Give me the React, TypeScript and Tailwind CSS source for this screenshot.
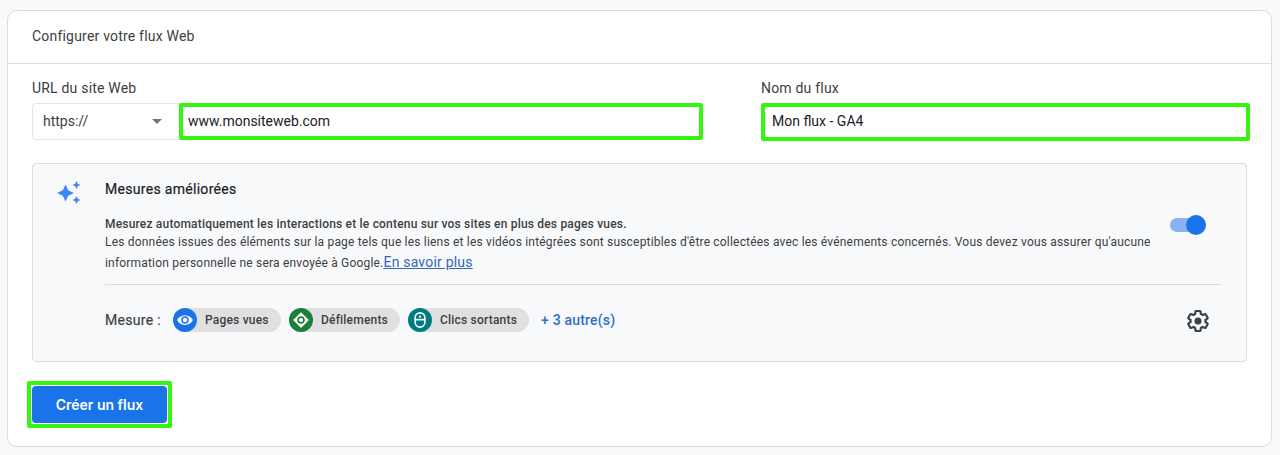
import React from "react";

function Chip({ color, label, children, width }: { color: string; label: string; children: React.ReactNode; width: string }) {
  return (
    <div className={`flex h-6 items-center rounded-full bg-[#e0e0e0] ${width}`}>
      <div className={`flex h-6 w-6 shrink-0 items-center justify-center rounded-full ${color}`}>{children}</div>
      <span className="ml-2 text-[12px] font-medium tracking-[0.2px] text-[#3c4043]">{label}</span>
    </div>
  );
}

export default function App() {
  return (
    <div className="h-[455px] overflow-hidden bg-[#f8f9fa] pl-[7px] pt-[10px] font-['Roboto',sans-serif]">
      <div className="h-[437px] w-[1265px] rounded-[10px] border border-[#dadce0] bg-white">
        <div className="flex h-[53px] items-center border-b border-[#dadce0] pb-[2px] pl-[24px] text-[14px] tracking-[0.2px] text-[#3c4043]">
          Configurer votre flux Web
        </div>
        <div className="px-[24px] pt-[15px]">
          <div className="flex">
            <div className="w-[672px] shrink-0">
              <div className="h-[24px] text-[14px] leading-[18px] tracking-[0.2px] text-[#3c4043]">URL du site Web</div>
              <div className="flex h-[37px]">
                <div className="flex w-[148px] items-center justify-between rounded-l-[4px] border border-[#e3e5e8] pl-[10px] pr-[17px] text-[14px] text-[#3c4043]">
                  <span>https://</span>
                  <span className="h-0 w-0 border-x-[5px] border-t-[5px] border-x-transparent border-t-[#757575]" />
                </div>
                <div className="-ml-px flex h-[37px] w-[524px] items-center rounded-[2px] border-[4px] border-[#33f50f] pl-[5px] text-[14px] text-[#202124]">
                  www.monsiteweb.com
                </div>
              </div>
            </div>
            <div className="ml-[57px] w-[489px] shrink-0">
              <div className="h-[24px] text-[14px] leading-[18px] tracking-[0.2px] text-[#3c4043]">Nom du flux</div>
              <div className="flex h-[38px] items-center rounded-[2px] border-[4px] border-[#33f50f] pb-px pl-[7px] text-[14px] text-[#202124]">
                Mon flux - GA4
              </div>
            </div>
          </div>

          <div className="mt-[22px] h-[199px] w-[1215px] rounded-[4px] border border-[#dadce0] bg-[#f8f9fa]">
            <div className="flex">
              <div className="w-[72px] shrink-0 pl-[24px] pt-[17px]">
                <svg width="24" height="24" viewBox="0 0 24 24" fill="#4285f4">
                  <path d="M8.500 3.500 11.200 9.300 17 12l-5.800 2.700L8.500 20.500 5.800 14.700 0 12l5.800-2.700z" />
                  <path d="M19.500 0l1.300 2.700L23.500 4l-2.700 1.300L19.500 8l-1.300-2.700L15.500 4l2.700-1.300z" />
                  <path d="M19.500 15l1.300 2.700L23.500 19l-2.700 1.300L19.500 23l-1.300-2.700L15.500 19l2.700-1.300z" />
                </svg>
              </div>
              <div className="min-w-0 flex-1">
                <div className="pt-[16px] text-[14px] leading-[18px] tracking-[0.3px] text-[#202124] [-webkit-text-stroke:0.2px_#202124]">Mesures améliorées</div>
                <div className="flex">
                  <div className="w-[1060px] pt-[17px] text-[12px] tracking-[0.19px] text-[#3c4043]">
                    <div className="text-[12px] font-medium leading-[18px]">Mesurez automatiquement les interactions et le contenu sur vos sites en plus des pages vues.</div>
                    <div className="leading-[18px]">Les données issues des éléments sur la page tels que les liens et les vidéos intégrées sont susceptibles d'être collectées avec les événements concernés. Vous devez vous assurer qu'aucune</div>
                    <div className="mt-[2px] leading-[18px]">
                      information personnelle ne sera envoyée à Google.
                      <span className="text-[14px] tracking-[0.2px] text-[#3367b8] underline">En savoir plus</span>
                    </div>
                  </div>
                  <div className="relative ml-[5px] mt-[20px] h-[14px] w-[34px] rounded-full bg-[#8ab0f5]">
                    <div className="absolute -top-[3px] left-[16px] h-[20px] w-[20px] rounded-full bg-[#1a73e8]" />
                  </div>
                </div>
              </div>
            </div>
            <div className="ml-[72px] mr-[25px] mt-[12px] border-t border-[#dadce0]" />
            <div className="ml-[72px] mr-[36px] mt-[23px] flex h-[24px] items-center">
              <span className="w-[68px] text-[14px] tracking-[0.3px] text-[#3c4043] [-webkit-text-stroke:0.2px_#3c4043]">Mesure :</span>
              <div className="flex gap-[8px]">
                <Chip color="bg-[#1a73e8]" label="Pages vues" width="w-[108px]">
                  <svg width="18" height="18" viewBox="0 0 24 24" fill="none">
                    <path d="M12 5.500C7 5.500 3.200 8.400 1.500 12c1.700 3.600 5.500 6.500 10.500 6.500s8.800-2.900 10.500-6.500C20.800 8.400 17 5.500 12 5.500z" fill="#fff" />
                    <circle cx="12" cy="12" r="5" fill="#1a73e8" />
                    <circle cx="12" cy="12" r="3" fill="#fff" />
                  </svg>
                </Chip>
                <Chip color="bg-[#188038]" label="Défilements" width="w-[111px]">
                  <svg width="18" height="18" viewBox="0 0 24 24" fill="none">
                    <path d="M12 1.500 22.500 12 12 22.500 1.500 12z" fill="#fff" />
                    <circle cx="12" cy="12" r="5" fill="#188038" />
                    <circle cx="12" cy="12" r="2.800" fill="#fff" />
                  </svg>
                </Chip>
                <Chip color="bg-[#007b83]" label="Clics sortants" width="w-[121px]">
                  <svg width="18" height="18" viewBox="0 0 24 24" fill="none" stroke="#fff" strokeWidth="2.200">
                    <rect x="5.500" y="2.500" width="13" height="19" rx="6.500" />
                    <path d="M5.500 11.500h13" />
                    <path d="M12 6v3" />
                  </svg>
                </Chip>
              </div>
              <span className="ml-[12px] text-[14px] font-medium tracking-[0.2px] text-[#2f6fc6]">+ 3 autre(s)</span>
              <svg className="ml-auto mt-[2px]" width="24" height="24" viewBox="0 0 24 24" fill="none">
                <path d="M19.430 12.980c.040-.320.070-.640.070-.980s-.030-.660-.070-.980l2.110-1.650c.190-.150.240-.420.120-.640l-2-3.460c-.120-.220-.390-.300-.610-.220l-2.490 1c-.520-.400-1.080-.730-1.690-.980l-.380-2.650C14.460 2.180 14.250 2 14 2h-4c-.250 0-.460.180-.490.420l-.380 2.650c-.610.250-1.170.590-1.690.980l-2.490-1c-.230-.090-.490 0-.610.220l-2 3.460c-.130.220-.070.490.120.640l2.110 1.650c-.040.320-.070.650-.070.980s.030.660.070.980l-2.110 1.650c-.190.150-.240.420-.120.640l2 3.460c.120.220.390.300.610.220l2.490-1c.520.400 1.080.730 1.690.980l.380 2.650c.030.240.240.420.490.420h4c.250 0 .460-.180.490-.420l.380-2.650c.610-.250 1.170-.590 1.690-.980l2.490 1c.230.090.490 0 .610-.220l2-3.460c.120-.220.070-.490-.120-.640l-2.110-1.650z" stroke="#3c4043" strokeWidth="2.200" />
                <circle cx="12" cy="12" r="3.500" fill="#3c4043" />
              </svg>
            </div>
          </div>

          <div className="-ml-[5px] mt-[19px] inline-block rounded-[2px] border-[4px] border-[#33f50f] p-px">
            <button className="flex h-[37px] w-[135px] items-center justify-center rounded-[4px] bg-[#1a73e8] font-['Inter',sans-serif] text-[14px] font-semibold text-white">
              Créer un flux
            </button>
          </div>
        </div>
      </div>
    </div>
  );
}
